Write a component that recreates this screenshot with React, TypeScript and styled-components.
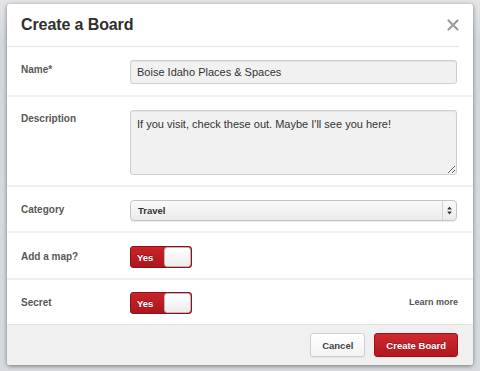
import React from "react";
import styled, { createGlobalStyle } from "styled-components";

const GlobalStyle = createGlobalStyle`
  html, body {
    margin: 0;
    padding: 0;
    background: #d7dade;
    font-family: "Liberation Sans", Arial, Helvetica, sans-serif;
  }
`;

const Page = styled.div`
  width: 480px;
  height: 371px;
  box-sizing: border-box;
  padding: 4px 7px 6px 7px;
  background: linear-gradient(180deg, #e4e5e7 0px, #d3d7dc 40px, #d6d9dd 100%);
  overflow: hidden;
`;

const Modal = styled.div`
  width: 466px;
  height: 361px;
  background: #fff;
  border-radius: 3px;
  box-shadow: 0 1px 4px rgba(0, 0, 0, 0.45);
  display: flex;
  flex-direction: column;
  overflow: hidden;
`;

const Header = styled.div`
  height: 42px;
  margin-right: 14px;
  padding-left: 14px;
  display: flex;
  align-items: center;
  justify-content: space-between;
  border-bottom: 1px solid #e6e6e6;
`;

const Title = styled.h1`
  margin: 0;
  font-size: 16px;
  font-weight: bold;
  color: #2f2f2f;
  letter-spacing: -0.1px;
`;

const Close = styled.button`
  border: 0;
  background: none;
  padding: 0;
  width: 12px;
  height: 12px;
  display: flex;
  cursor: pointer;
`;

const Row = styled.div<{ $h: number; $top?: number; $last?: boolean }>`
  height: ${(p) => p.$h}px;
  box-sizing: border-box;
  padding: ${(p) => p.$top ?? 13}px 16px 0 14px;
  display: grid;
  grid-template-columns: 109px 1fr auto;
  align-items: start;
  border-bottom: ${(p) => (p.$last ? "0" : "2px solid #efefef")};
`;

const Label = styled.label<{ $top: number }>`
  padding-top: ${(p) => p.$top}px;
  font-size: 10px;
  font-weight: bold;
  color: #585858;
`;

const TextInput = styled.input`
  width: 100%;
  height: 24px;
  box-sizing: border-box;
  margin: 0;
  padding: 0 6px;
  border: 1px solid #cfcfcf;
  border-radius: 3px;
  background: #f1f1f1;
  box-shadow: inset 0 1px 1px rgba(0, 0, 0, 0.05);
  font-family: inherit;
  font-size: 11px;
  color: #333;
  outline: none;
`;

const TextArea = styled.textarea`
  width: 100%;
  height: 65px;
  box-sizing: border-box;
  margin: 0;
  padding: 7px 6px;
  border: 1px solid #cfcfcf;
  border-radius: 3px;
  background: #f1f1f1;
  box-shadow: inset 0 1px 1px rgba(0, 0, 0, 0.05);
  font-family: inherit;
  font-size: 11px;
  color: #333;
  outline: none;
  display: block;
`;

const Select = styled.div`
  height: 21px;
  box-sizing: border-box;
  display: flex;
  align-items: stretch;
  border: 1px solid #c4c4c4;
  border-radius: 4px;
  background: linear-gradient(180deg, #fafafa 0%, #ebebeb 100%);
  box-shadow: 0 1px 1px rgba(0, 0, 0, 0.08);
`;

const SelectValue = styled.span`
  flex: 1;
  padding-left: 7px;
  display: flex;
  align-items: center;
  font-size: 9.5px;
  font-weight: bold;
  color: #333;
`;

const SelectArrows = styled.span`
  width: 13px;
  border-left: 1px solid #d4d4d4;
  display: flex;
  align-items: center;
  justify-content: center;
`;

const Toggle = styled.div`
  width: 62px;
  height: 22px;
  box-sizing: border-box;
  display: flex;
  border: 1px solid #8e1014;
  border-radius: 3px;
  background: linear-gradient(180deg, #c9242a 0%, #ad161c 100%);
  overflow: hidden;
`;

const ToggleText = styled.span`
  flex: 1;
  display: flex;
  align-items: center;
  padding-left: 6px;
  font-size: 9.5px;
  font-weight: bold;
  color: #fff;
  text-shadow: 0 -1px 0 rgba(0, 0, 0, 0.3);
`;

const Knob = styled.span`
  width: 27px;
  border-radius: 3px;
  background: linear-gradient(180deg, #ffffff 0%, #ececec 100%);
  border: 1px solid #b9b9b9;
  box-sizing: border-box;
`;

const LearnMore = styled.a`
  padding-top: 5px;
  font-size: 9px;
  font-weight: bold;
  color: #555;
  text-decoration: none;
  margin-right: -1px;
`;

const Footer = styled.div`
  flex: 1;
  background: #f0f0f0;
  border-top: 1px solid #e3e3e3;
  display: flex;
  justify-content: flex-end;
  align-items: center;
  gap: 9px;
  padding: 0 15px 0 0;
`;

const Button = styled.button<{ $primary?: boolean }>`
  height: 24px;
  margin: 0;
  padding: 0 11px;
  border-radius: 3px;
  font-family: inherit;
  font-size: 9.5px;
  font-weight: bold;
  cursor: pointer;
  border: 1px solid ${(p) => (p.$primary ? "#9c1116" : "#cfcfcf")};
  color: ${(p) => (p.$primary ? "#fff" : "#444")};
  background: ${(p) =>
    p.$primary
      ? "linear-gradient(180deg, #d02a30 0%, #b0171d 100%)"
      : "linear-gradient(180deg, #ffffff 0%, #f3f3f3 100%)"};
  text-shadow: ${(p) => (p.$primary ? "0 -1px 0 rgba(0,0,0,0.25)" : "none")};
  box-shadow: 0 1px 1px rgba(0, 0, 0, 0.06);
`;

const CloseIcon = () => (
  <svg width="12" height="12" viewBox="0 0 12 12">
    <path d="M1.5 1.5 L10.5 10.5 M10.5 1.5 L1.5 10.5" stroke="#9d9d9d" strokeWidth="2.2" strokeLinecap="round" />
  </svg>
);

const UpDown = () => (
  <svg width="5" height="9" viewBox="0 0 5 9">
    <path d="M2.5 0.5 L4.8 3.6 L0.2 3.6 Z M2.5 8.5 L4.8 5.4 L0.2 5.4 Z" fill="#333" />
  </svg>
);

const Switch: React.FC<{ label: string }> = ({ label }) => (
  <Toggle>
    <ToggleText>{label}</ToggleText>
    <Knob />
  </Toggle>
);

const App: React.FC = () => (
  <Page>
    <GlobalStyle />
    <Modal>
      <Header>
        <Title>Create a Board</Title>
        <Close aria-label="Close">
          <CloseIcon />
        </Close>
      </Header>

      <Row $h={50}>
        <Label $top={4}>Name*</Label>
        <TextInput readOnly value="Boise Idaho Places & Spaces" />
      </Row>

      <Row $h={90}>
        <Label $top={3}>Description</Label>
        <TextArea readOnly value="If you visit, check these out. Maybe I'll see you here!" />
      </Row>

      <Row $h={46}>
        <Label $top={4}>Category</Label>
        <Select>
          <SelectValue>Travel</SelectValue>
          <SelectArrows>
            <UpDown />
          </SelectArrows>
        </Select>
      </Row>

      <Row $h={47}>
        <Label $top={5}>Add a map?</Label>
        <div>
          <Switch label="Yes" />
        </div>
      </Row>

      <Row $h={44} $top={12} $last>
        <Label $top={5}>Secret</Label>
        <div>
          <Switch label="Yes" />
        </div>
        <LearnMore href="#">Learn more</LearnMore>
      </Row>

      <Footer>
        <Button>Cancel</Button>
        <Button $primary>Create Board</Button>
      </Footer>
    </Modal>
  </Page>
);

export default App;
